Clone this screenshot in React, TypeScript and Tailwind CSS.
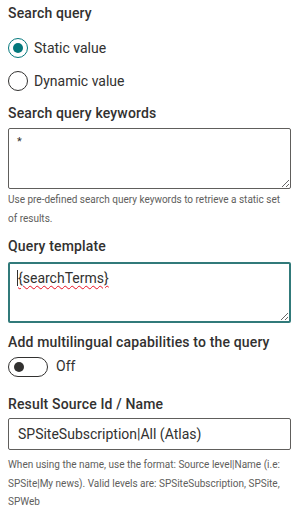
import { useState } from 'react';

const font = { fontFamily: 'Roboto, "Liberation Sans", sans-serif' };

const Label = ({ children }: { children: React.ReactNode }) => (
  <div className="text-[14px] font-medium leading-[20px] tracking-[0.15px] text-[#323130]">
    {children}
  </div>
);

const Help = ({ children, className = '' }: { children: React.ReactNode; className?: string }) => (
  <div className={'text-[10px] leading-[18.5px] text-[#605e5c] ' + className}>{children}</div>
);

const Radio = ({ checked, label }: { checked?: boolean; label: string }) => (
  <div className="flex h-[20px] items-center gap-[6px]">
    <span
      className={
        'flex h-[20px] w-[20px] items-center justify-center rounded-full border ' +
        (checked ? 'border-[#03787c]' : 'border-[#323130]')
      }
    >
      {checked && <span className="h-[10px] w-[10px] rounded-full bg-[#03787c]" />}
    </span>
    <span className="text-[14px] text-[#323130]">{label}</span>
  </div>
);

export default function App() {
  const [on] = useState(false);
  return (
    <div className="w-[297px] bg-white px-2 pt-[3px]" style={font}>
      <Label>Search query</Label>
      <div className="mt-[15px] flex flex-col gap-[13px]">
        <Radio checked label="Static value" />
        <Radio label="Dynamic value" />
      </div>

      <div className="mt-[12px]">
        <Label>Search query keywords</Label>
        <div className="mt-[5px] h-[61px] w-[283px] resize-y rounded-[2px] border border-[#605e5c] px-[8px] py-[5px] text-[11px] text-[#323130] [overflow:auto]">
          *
        </div>
        <Help className="mt-[2px]">
          Use pre-defined search query keywords to retrieve a static set of results.
        </Help>
      </div>

      <div className="mt-[8px]">
        <Label>Query template</Label>
        <div className="mt-[6px] h-[61px] w-[283px] resize-y rounded-[2px] border-2 border-[#317a7a] px-[7px] py-[4px] text-[14px] text-[#323130] [overflow:auto]">
          <span className="border-l border-[#323130]" />
          <span className="underline decoration-wavy decoration-[#e81123] decoration-1 underline-offset-2">
            {'{searchTerms}'}
          </span>
        </div>
      </div>

      <div className="mt-[9px]">
        <Label>Add multilingual capabilities to the query</Label>
        <div className="mt-[4px] flex items-center gap-[8px]">
          <span className="flex h-[20px] w-[40px] items-center rounded-full border border-[#323130] px-[5px]">
            <span className={'h-[10px] w-[10px] rounded-full bg-[#323130] ' + (on ? 'ml-auto' : '')} />
          </span>
          <span className="text-[14px] text-[#323130]">Off</span>
        </div>
      </div>

      <div className="mt-[17px]">
        <Label>Result Source Id / Name</Label>
        <div className="mt-[4px] flex h-[32px] w-[283px] items-center rounded-[2px] border border-[#605e5c] px-[9px] text-[14px] text-[#323130]">
          SPSiteSubscription|All (Atlas)
        </div>
        <Help className="mt-[6px]">
          When using the name, use the format: Source level|Name (i.e: SPSite|My news). Valid
          levels are: SPSiteSubscription, SPSite, SPWeb
        </Help>
      </div>
    </div>
  );
}
